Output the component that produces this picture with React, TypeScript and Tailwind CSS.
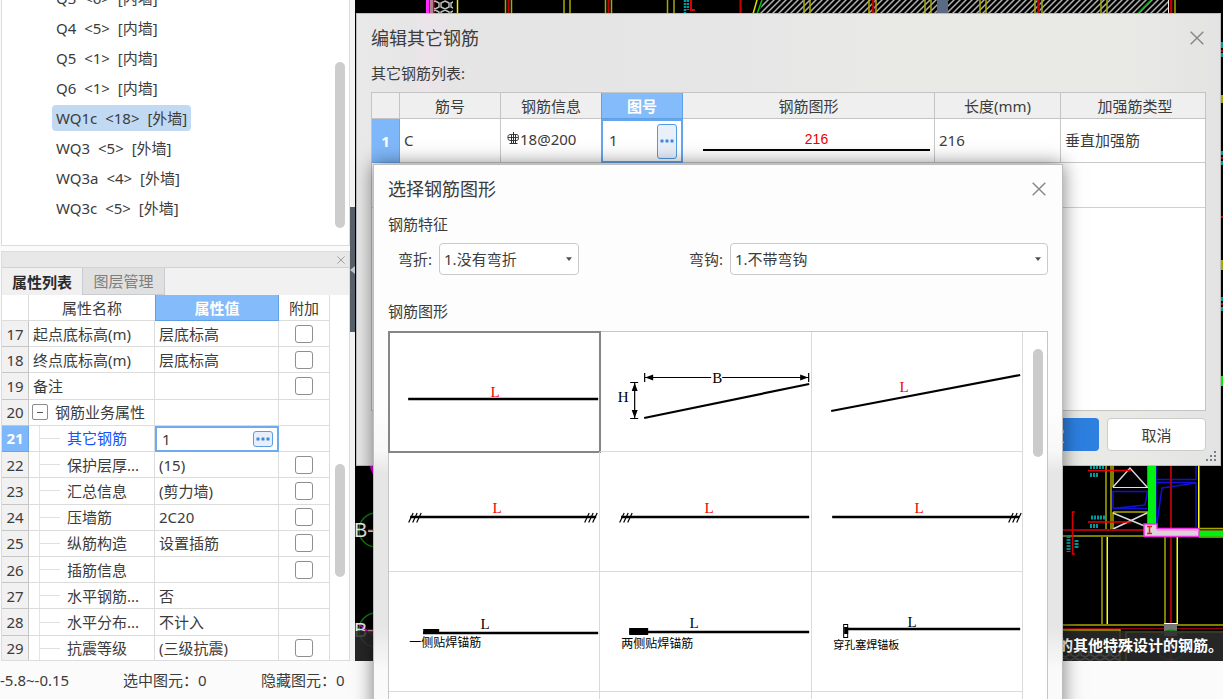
import { useState, type ReactNode } from "react";

const walls = [
  { name: "Q3", count: "<6>", type: "[内墙]" },
  { name: "Q4", count: "<5>", type: "[内墙]" },
  { name: "Q5", count: "<1>", type: "[内墙]" },
  { name: "Q6", count: "<1>", type: "[内墙]" },
  { name: "WQ1c", count: "<18>", type: "[外墙]" },
  { name: "WQ3", count: "<5>", type: "[外墙]" },
  { name: "WQ3a", count: "<4>", type: "[外墙]" },
  { name: "WQ3c", count: "<5>", type: "[外墙]" },
];

type Prop = { no: number; name: string; value: string; kind: "root" | "group" | "child"; check: boolean };

const props: Prop[] = [
  { no: 17, name: "起点底标高(m)", value: "层底标高", kind: "root", check: true },
  { no: 18, name: "终点底标高(m)", value: "层底标高", kind: "root", check: true },
  { no: 19, name: "备注", value: "", kind: "root", check: true },
  { no: 20, name: "钢筋业务属性", value: "", kind: "group", check: false },
  { no: 21, name: "其它钢筋", value: "1", kind: "child", check: false },
  { no: 22, name: "保护层厚...", value: "(15)", kind: "child", check: true },
  { no: 23, name: "汇总信息", value: "(剪力墙)", kind: "child", check: true },
  { no: 24, name: "压墙筋", value: "2C20", kind: "child", check: true },
  { no: 25, name: "纵筋构造", value: "设置插筋", kind: "child", check: true },
  { no: 26, name: "插筋信息", value: "", kind: "child", check: true },
  { no: 27, name: "水平钢筋...", value: "否", kind: "child", check: false },
  { no: 28, name: "水平分布...", value: "不计入", kind: "child", check: false },
  { no: 29, name: "抗震等级", value: "(三级抗震)", kind: "child", check: true },
];

function CloseIcon({ className }: { className: string }) {
  return (
    <svg viewBox="0 0 14 14" className={className} fill="none" stroke="currentColor" aria-hidden="true">
      <path d="M0.7 0.7 13.3 13.3M13.3 0.7 0.7 13.3" strokeWidth="1.4" />
    </svg>
  );
}

function Dots() {
  return (
    <svg viewBox="0 0 14 4" className="h-1 w-3.5" fill="#3f87d9" aria-hidden="true">
      <rect x="0.5" y="0.5" width="3" height="3" rx="0.6" />
      <rect x="5.5" y="0.5" width="3" height="3" rx="0.6" />
      <rect x="10.5" y="0.5" width="3" height="3" rx="0.6" />
    </svg>
  );
}

function WallTree() {
  const [selected, setSelected] = useState(4);
  return (
    <div className="flex h-[246px] shrink-0 border border-t-0 border-[#dcdcdc] bg-white">
      <ul className="flex flex-1 flex-col justify-end overflow-hidden pb-[22px] pl-[50px]">
        {walls.map((w, i) => (
          <li key={w.name} className="flex h-[30px] shrink-0 items-center">
            <button
              type="button"
              onClick={() => setSelected(i)}
              className={`flex h-[26px] items-center gap-1 rounded px-1 whitespace-pre ${i === selected ? "bg-[#c1d9f2]" : ""}`}
            >
              <span>{w.name} </span>
              <span>{w.count} </span>
              <span>{w.type}</span>
            </button>
          </li>
        ))}
      </ul>
      <div className="flex w-[14px] flex-col pt-[62px]">
        <div className="h-[166px] w-2.5 rounded-full bg-[#cdcdcd]" />
      </div>
    </div>
  );
}

function NameCell({ row }: { row: Prop }) {
  if (row.kind === "root") return <span className="pl-1">{row.name}</span>;
  if (row.kind === "group")
    return (
      <div className="flex items-center gap-[7px] pl-[3px]">
        <button
          type="button"
          aria-label="折叠"
          className="flex h-4 w-4 items-center justify-center rounded-[2px] border border-[#8c8c8c] bg-white"
        >
          <span className="h-px w-1.5 bg-[#555]" />
        </button>
        <span>{row.name}</span>
      </div>
    );
  return (
    <div className="ml-[10px] flex h-full items-center border-l border-[#e4e4e4]">
      <span className="h-px w-5 bg-[#e0e0e0]" />
      <span className={`pl-[7px] ${row.no === 21 ? "text-[#1650ff]" : ""}`}>{row.name}</span>
    </div>
  );
}

function PropertyPanel() {
  return (
    <section className="flex min-h-0 flex-1 flex-col overflow-hidden border border-[#dcdcdc] bg-white">
      <div className="flex h-[15px] shrink-0 items-center justify-end bg-[#e8e8e8] pr-1">
        <button type="button" aria-label="关闭" className="text-[#8e8e8e]">
          <CloseIcon className="h-2 w-2" />
        </button>
      </div>
      <div className="flex h-[28px] shrink-0 border-t border-[#cfd3d8] bg-[#f1f1f1]" role="tablist">
        <button type="button" role="tab" aria-selected="true" className="w-[81px] border-r border-[#c9ccd2] bg-[#f0f0f0] font-bold text-[#2b2b2b]">
          属性列表
        </button>
        <button type="button" role="tab" aria-selected="false" className="w-[82px] border-r border-b border-[#c9ccd2] bg-[#e0e0e0] text-[#7e7e7e]">
          图层管理
        </button>
      </div>
      <div className="flex min-h-0 flex-1">
        <table className="h-[367px] flex-1 table-fixed border-separate border-spacing-0 text-left">
          <colgroup>
            <col className="w-[27px]" />
            <col className="w-[126px]" />
            <col />
            <col className="w-[51px]" />
          </colgroup>
          <thead>
            <tr className="h-[26px] text-center">
              <th className="border-r border-b border-[#dcdcdc] p-0" aria-label="行号" />
              <th className="border-b border-[#dcdcdc] p-0 font-normal">属性名称</th>
              <th className="border border-t-0 border-[#5f9fe3] bg-[#84bbfb] p-0 font-bold text-white">属性值</th>
              <th className="border-r border-b border-[#dcdcdc] p-0 font-normal">附加</th>
            </tr>
          </thead>
          <tbody>
            {props.map((row) => {
              const active = row.no === 21;
              return (
                <tr key={row.no} className="h-[26px]">
                  <th
                    className={`border-r border-b p-0 text-center ${
                      active
                        ? "border-[#6aa5e8] bg-[#7fb8fa] font-bold text-white"
                        : "border-[#c6c6c6] bg-[#f1f1f1] font-normal"
                    }`}
                  >
                    {row.no}
                  </th>
                  <td className="h-[26px] overflow-hidden border-r border-b border-[#dcdcdc] p-0 whitespace-nowrap">
                    <NameCell row={row} />
                  </td>
                  {active ? (
                    <td className="border-2 border-[#6eaaee] p-0">
                      <div className="flex items-center justify-between pr-1 pl-[5px]">
                        <input aria-label="其它钢筋" defaultValue="1" className="h-5 w-16 bg-transparent outline-none" />
                        <button
                          type="button"
                          aria-label="编辑"
                          className="flex h-4 w-5 items-center justify-center rounded-[3px] border border-[#5a9fe6] bg-[#e8effa]"
                        >
                          <Dots />
                        </button>
                      </div>
                    </td>
                  ) : (
                    <td className="border-r border-b border-[#dcdcdc] py-0 pr-0 pl-1 whitespace-nowrap">{row.value}</td>
                  )}
                  <td className="border-r border-b border-[#dcdcdc] p-0">
                    {row.check && (
                      <input
                        type="checkbox"
                        aria-label={`附加 ${row.name}`}
                        className="mx-auto block h-[18px] w-[18px] appearance-none rounded-[3px] border border-[#8f8f8f] bg-white checked:bg-[#84bbfb]"
                      />
                    )}
                  </td>
                </tr>
              );
            })}
          </tbody>
        </table>
        <div className="w-[19px] pt-[169px] pl-[5px]">
          <div className="h-[113px] w-2.5 rounded-full bg-[#cdcdcd]" />
        </div>
      </div>
    </section>
  );
}

function Plan() {
  const olive = "#a8a800";
  return (
    <svg viewBox="355 0 868 661" preserveAspectRatio="xMaxYMin slice" className="h-full w-full bg-black" fill="none" aria-hidden="true">
      <defs>
        <pattern id="hatch" width="6" height="6" patternUnits="userSpaceOnUse">
          <path d="M-1 7 7 -1M-1 1 1 -1M5 7 7 5" stroke="#b0b0b0" strokeWidth="1.500" />
        </pattern>
        <pattern id="comb" width="10" height="9" patternUnits="userSpaceOnUse">
          <path d="M5 1 9 3V7L5 9 1 7V3Z" stroke="#bdbdbd" strokeWidth="1.500" />
        </pattern>
      </defs>
      <path d="M427.500 0V14" stroke="#ff2bff" strokeWidth="3" />
      <path d="M431.500 0V14" stroke="#b08090" strokeWidth="4" />
      <path d="M434 0V14" stroke="#d00020" />
      <rect x="434" y="0" width="19" height="14" fill="url(#comb)" />
      <path d="M457.500 0V14" stroke="#f0f000" strokeWidth="1.500" />
      <g stroke={olive} strokeWidth="1.500">
        <path d="M505.500 0V14M511.500 0V14M564 0V14M570 0V14M605.500 0V14M611.500 0V14M667.500 0V14M674 0V14" />
      </g>
      <path d="M508.500 0V14M608.500 0V14M740.500 0V14" stroke="#c80000" strokeWidth="2" />
      <path d="M685 0V13M688 0V10" stroke="#009a9a" strokeWidth="2.500" strokeDasharray="2 1" />
      <path d="M691 0V10H695" stroke="#d80000" strokeWidth="2" />
      <path d="M764 0H1168V14H758Z" fill="url(#hatch)" />
      <path d="M757 0 753 14" stroke="#e0e000" strokeWidth="1.500" />
      <path d="M762 0 757 14" stroke="#00c800" strokeWidth="1.500" />
      <g stroke={olive} strokeWidth="1.500">
        <path d="M804 0V14M810 0V14M869 0V14M876 0V14M925 0V14M931 0V14M980 0V14M986 0V14M1035 0V14M1042 0V14M1101 0V14M1107 0V14M1175 0V14" />
      </g>
      <path d="M873 0V14M1038.500 0V14M1171 0V14" stroke="#c00000" strokeWidth="2.500" />
      <rect x="937" y="0" width="11" height="14" fill="#5b6a83" />
      <path d="M1151 0 1137 14" stroke="#00a000" strokeWidth="1.500" />
      <path d="M1168.500 0V14" stroke="#eee" />
      <g strokeWidth="2">
        <path d="M1222 42V48M1222 53V57M1222 151V155M1222 161V165M1222 297V301M1222 307V311" stroke="#009a9a" />
        <path d="M1222 50V52M1222 157V159M1222 216V218M1222 303V305" stroke="#d00000" />
        <path d="M1222 95V103M1222 260V270" stroke={olive} />
        <path d="M1222 376V386" stroke="#00f000" />
      </g>
      <g stroke="#0e7a0e" strokeWidth="1.500">
        <circle cx="376" cy="530" r="17" />
        <circle cx="376" cy="630" r="17" />
      </g>
      <path d="M368 530H378M368 630H378" stroke="#d00000" strokeWidth="1.500" />
      <path d="M371 466 376 478" stroke="#e000e0" strokeWidth="3" />
      <path d="M357 623 374 636" stroke="#e000e0" strokeWidth="1.500" />
      <g fill="#e8e8e8" className="font-['Liberation_Sans'] text-[20px]">
        <text x="354" y="537">B-</text>
        <text x="354" y="637">B-</text>
      </g>
      <g stroke={olive} strokeWidth="1.500">
        <path d="M1106 466V529M1111 466V529M1199 466V529" />
        <path d="M1063 536H1148M1063 625H1223M1063 630H1120V661M1126 661V632H1223M1102 537V624M1107 537V624M1165 537V624M1177 537V624M1199 528.500H1223M1199 537H1223" />
      </g>
      <path d="M1113 466V487.500H1148V466M1113 529V512H1148V529M1107.500 537V624M1177.500 537V624M1198.500 466V528" stroke="#ffff00" />
      <path d="M1113 487 1130 468 1147 487M1113 513 1147 527M1147 513 1113 529" stroke="#d8d8d8" strokeWidth="1.500" />
      <path d="M1113 491.500H1147.500L1145 505 1113 508.500ZM1113 508.500H1147M1156 466V530L1162 488 1196 483V527M1156 479.500H1196V466M1156 482.500H1196" stroke="#1010d8" strokeWidth="1.500" />
      <path d="M1152 466V525" stroke="#00f010" strokeWidth="8" />
      <path d="M1063 530H1223M1171 466V661" stroke="#a8000c" strokeWidth="2" />
      <path d="M1063 628.500H1223" stroke="#900010" />
      <path d="M1088 470.500H1131M1088 522H1131M1075 512H1072.500V554H1075" stroke="#e80000" strokeWidth="1.500" />
      <g stroke="#009a9a" strokeWidth="4" strokeDasharray="2 1">
        <path d="M1090 467H1106M1090 475H1098M1091 517.500H1106M1090 526H1098M1068.500 536V552M1076.500 540V549" />
      </g>
      <rect x="1199" y="530.500" width="24" height="6" fill="#00f010" />
      <path d="M1144 524H1157V528.500H1199V536.500H1144Z" fill="#dcd3da" stroke="#f030e8" strokeWidth="1.500" />
      <path d="M1147 526.500H1152M1149.500 526.500V533M1147 533.500H1152" stroke="#f01818" strokeWidth="1.500" />
      <path d="M1157 530.500H1199" stroke="#f09ad8" />
      <rect x="1164" y="623" width="13" height="13" fill="#777" />
      <path d="M1164 623.500H1177" stroke="#fff" />
      <circle cx="1171" cy="645" r="15" stroke="#0b7a0b" />
      <rect x="1063" y="651" width="57" height="10" fill="url(#comb)" />
    </svg>
  );
}

function RebarMark() {
  return (
    <svg viewBox="0 0 12 14" className="h-3.5 w-3" fill="none" stroke="#2f2f2f" aria-hidden="true">
      <path d="M6.500 0V11M4.500 2.500V11M8.500 2.500V11M2.500 11.500H10.500" />
      <path d="M4.500 2.500H3Q0.800 2.500 0.800 5.500T3 8.500H10Q11.500 8.500 11.500 5.500T10 2.500H4.500M1 5.500H11" strokeWidth="0.900" />
    </svg>
  );
}

function EditDialog() {
  return (
    <section
      aria-label="编辑其它钢筋"
      className="absolute top-[13px] right-[2px] left-[356px] flex h-[453px] flex-col border border-[#bdbdbd] bg-[linear-gradient(90deg,#e9e9e9_0%,#e6e6e6_6%,#ece4ea_8%,#e5e5e5_11%,#e6e6e6_45%,#e9eae6_60%,#e9eae6_90%,#e3e3e3_100%)] px-[14px]"
    >
      <header className="flex h-12 shrink-0 items-center justify-between">
        <h1 className="text-[18px] leading-6">编辑其它钢筋</h1>
        <button type="button" aria-label="关闭" className="pr-0.5 text-[#858585]">
          <CloseIcon className="h-3.5 w-3.5" />
        </button>
      </header>
      <h2 className="h-[30px] shrink-0 leading-[22px]">其它钢筋列表:</h2>
      <div className="h-[319px] shrink-0 border border-[#c4c4c4] bg-white">
        <table className="w-full table-fixed border-separate border-spacing-0 text-left">
          <colgroup>
            <col className="w-[28px]" />
            <col className="w-[101px]" />
            <col className="w-[100px]" />
            <col className="w-[82px]" />
            <col />
            <col className="w-[126px]" />
            <col className="w-[144px]" />
          </colgroup>
          <thead>
            <tr className="h-[26px] bg-[#efefef] text-center leading-[18px]">
              <th className="border-r border-b border-[#c4c4c4] p-0" aria-label="行号" />
              <th className="border-r border-b border-[#c4c4c4] p-0 font-normal">筋号</th>
              <th className="border-b border-[#c4c4c4] p-0 font-normal">钢筋信息</th>
              <th className="border border-t-0 border-[#5fa0e6] bg-[#84bbfb] p-0 font-bold text-white">图号</th>
              <th className="border-r border-b border-[#c4c4c4] p-0 font-normal">钢筋图形</th>
              <th className="border-r border-b border-[#c4c4c4] p-0 font-normal">长度(mm)</th>
              <th className="border-b border-[#c4c4c4] p-0 pl-1 font-normal">加强筋类型</th>
            </tr>
          </thead>
          <tbody>
            <tr className="h-[44px]">
              <th className="border-r border-b border-[#6aa5e8] bg-[#7fb8fa] p-0 text-center font-bold text-white">1</th>
              <td className="border-r border-b border-[#c9c9c9] pt-0 pr-0 pb-0.5 pl-1">C</td>
              <td className="border-b border-[#c9c9c9] pt-0 pr-0 pb-1 pl-1.5">
                <span className="flex items-center gap-px">
                  <RebarMark />
                  18@200
                </span>
              </td>
              <td className="border-2 border-[#64a6ee] p-0">
                <div className="flex items-center justify-between pr-1 pl-1.5">
                  <input aria-label="图号" defaultValue="1" className="h-6 w-8 bg-transparent pb-0.5 outline-none" />
                  <button
                    type="button"
                    aria-label="选择图形"
                    className="flex h-[35px] w-5 items-center justify-center rounded-[3px] border border-[#4f9ce6] bg-[#eaf0fa]"
                  >
                    <Dots />
                  </button>
                </div>
              </td>
              <td className="border-r border-b border-[#c9c9c9] py-0 pr-1 pl-5">
                <div className="border-b-2 border-black pb-0.5 text-center font-['Liberation_Sans'] text-sm leading-4 text-[#f00000]">
                  216
                </div>
              </td>
              <td className="border-r border-b border-[#c9c9c9] pt-0 pr-0 pb-0.5 pl-1">216</td>
              <td className="border-b border-[#c9c9c9] pt-0 pr-0 pb-0.5 pl-1">垂直加强筋</td>
            </tr>
            <tr className="h-[45px]">
              <td colSpan={7} className="border-b border-[#d0d0d0] p-0" />
            </tr>
          </tbody>
        </table>
      </div>
      <footer className="flex justify-end gap-2 pt-[7px]">
        <button type="button" className="h-[33px] w-[99px] rounded bg-[#2d7fe0] text-white">
          确定
        </button>
        <button type="button" className="h-[33px] w-[99px] rounded border border-[#cccccc] bg-white">
          取消
        </button>
      </footer>
      <svg viewBox="0 0 10 10" className="absolute right-1 bottom-1 h-2.5 w-2.5" fill="#777d86" aria-hidden="true">
        <path d="M8 0h2v2h-2zM4 4h2v2h-2zM8 4h2v2h-2zM0 8h2v2h-2zM4 8h2v2h-2zM8 8h2v2h-2z" />
      </svg>
    </section>
  );
}

function Hatches({ x }: { x: number }) {
  return (
    <g stroke="#000" strokeWidth="1.200" transform={`translate(${x} 61)`}>
      <path d="M0.500 10.500 5 1M4.500 10.500 9 1M8.500 10.500 13 1" />
    </g>
  );
}

function Len({ x, y, color }: { x: number; y: number; color: string }) {
  return (
    <text x={x} y={y} fill={color} textAnchor="middle" className="font-['Liberation_Serif'] text-[15px]">
      L
    </text>
  );
}

function Caption({ x, y, children }: { x: number; y: number; children: ReactNode }) {
  return (
    <text x={x} y={y} fill="#000" className="text-[12px]">
      {children}
    </text>
  );
}

const shapes: { label: string; art: ReactNode }[] = [
  {
    label: "直筋",
    art: (
      <>
        <path d="M20 68H210" stroke="#000" strokeWidth="2.500" />
        <Len x={107} y={66} color="#f00000" />
      </>
    ),
  },
  {
    label: "斜筋 H B",
    art: (
      <>
        <path d="M45 87 210 53" stroke="#000" strokeWidth="2.200" />
        <path d="M45.500 42V51M209.500 42V51M46 46.500H112M123 46.500H209M31 51.500H39M31 87.500H39M35.500 52V87" stroke="#000" strokeWidth="1.200" />
        <path d="M46 46.500 54 43.500V49.500ZM209 46.500 201 43.500V49.500ZM35.500 52 32.500 60H38.500ZM35.500 87 32.500 79H38.500Z" fill="#000" />
        <g fill="#000" textAnchor="middle" className="font-['Liberation_Serif'] text-[15px]">
          <text x="118" y="52">B</text>
          <text x="24" y="71">H</text>
        </g>
      </>
    ),
  },
  {
    label: "斜筋",
    art: (
      <>
        <path d="M20 80 209 44" stroke="#000" strokeWidth="2.200" />
        <Len x={93} y={61} color="#f00000" />
      </>
    ),
  },
  {
    label: "两端锚固",
    art: (
      <>
        <path d="M22 66H208" stroke="#000" strokeWidth="2.500" />
        <Hatches x={20} />
        <Hatches x={196} />
        <Len x={109} y={62} color="#f00000" />
      </>
    ),
  },
  {
    label: "左端锚固",
    art: (
      <>
        <path d="M22 66H210" stroke="#000" strokeWidth="2.500" />
        <Hatches x={20} />
        <Len x={110} y={62} color="#f00000" />
      </>
    ),
  },
  {
    label: "右端锚固",
    art: (
      <>
        <path d="M21 66H208" stroke="#000" strokeWidth="2.500" />
        <Hatches x={197} />
        <Len x={108} y={62} color="#f00000" />
      </>
    ),
  },
  {
    label: "一侧贴焊锚筋",
    art: (
      <>
        <path d="M35 62H210" stroke="#000" strokeWidth="2.500" />
        <rect x="35" y="58" width="16" height="5" fill="#000" />
        <Len x={97} y={58} color="#000" />
        <Caption x={21} y={76}>一侧贴焊锚筋</Caption>
      </>
    ),
  },
  {
    label: "两侧贴焊锚筋",
    art: (
      <>
        <path d="M30 61H210" stroke="#000" strokeWidth="2.500" />
        <rect x="30" y="57" width="19" height="7" fill="#000" />
        <Len x={95} y={57} color="#000" />
        <Caption x={22} y={77}>两侧贴焊锚筋</Caption>
      </>
    ),
  },
  {
    label: "穿孔塞焊锚板",
    art: (
      <>
        <path d="M36 58H209" stroke="#000" strokeWidth="2.500" />
        <rect x="32.500" y="53.500" width="4" height="13" fill="#fff" stroke="#000" />
        <rect x="33" y="56" width="4" height="7" fill="#000" />
        <Len x={101} y={56} color="#000" />
        <text x="22" y="78" fill="#000" className="text-[11px]">穿孔塞焊锚板</text>
      </>
    ),
  },
  { label: "图形10", art: null },
  { label: "图形11", art: null },
  { label: "图形12", art: null },
];

function Choice({ id, label, option, className }: { id: string; label: string; option: string; className: string }) {
  return (
    <div className="flex items-center gap-[7px]">
      <label htmlFor={id}>{label}</label>
      <div className={`relative ${className}`}>
        <select id={id} className="h-8 w-full appearance-none rounded border border-[#cacaca] bg-white pl-1">
          <option>{option}</option>
        </select>
        <svg viewBox="0 0 8 5" className="pointer-events-none absolute top-3.5 right-[7px] h-1 w-1.5" fill="#4a5260" aria-hidden="true">
          <path d="M0 0H8L4 5Z" />
        </svg>
      </div>
    </div>
  );
}

function ShapeDialog() {
  const [picked, setPicked] = useState(0);
  return (
    <section
      aria-label="选择钢筋图形"
      className="absolute top-[164px] -bottom-4 left-[373px] flex w-[690px] flex-col overflow-hidden border border-[#bdbdbd] bg-[linear-gradient(180deg,#fdfdfd_0%,#fdfdfd_44%,#f8f8f9_52%,#e7e6e6_56%,#e6e6e6_84%,#fafafa_92%)] px-[14px] shadow-[0_0_18px_rgba(0,0,0,0.5)]"
    >
      <header className="flex h-12 shrink-0 items-center justify-between">
        <h1 className="text-[18px] leading-6">选择钢筋图形</h1>
        <button type="button" aria-label="关闭" className="pr-0.5 text-[#858585]">
          <CloseIcon className="h-3.5 w-3.5" />
        </button>
      </header>
      <h2 className="h-[30px] shrink-0 leading-[22px]">钢筋特征</h2>
      <div className="flex h-8 shrink-0 justify-between pl-2.5">
        <Choice id="bend" label="弯折:" option="1.没有弯折" className="w-[140px]" />
        <Choice id="hook" label="弯钩:" option="1.不带弯钩" className="w-[318px]" />
      </div>
      <h2 className="mt-6 h-[32px] shrink-0 leading-6">钢筋图形</h2>
      <div className="flex shrink-0 border border-[#c6c6c6] bg-white">
        <div className="grid flex-1 grid-cols-3">
          {shapes.map((s, i) => (
            <button
              key={s.label}
              type="button"
              aria-label={s.label}
              aria-pressed={i === picked}
              onClick={() => setPicked(i)}
              className={`h-[120px] border-r border-b border-[#dadada] ${i === picked ? "outline-2 -outline-offset-1 outline-[#868686]" : ""}`}
            >
              <svg viewBox="1 1 210 119" className="h-full w-full" fill="none">
                {s.art}
              </svg>
            </button>
          ))}
        </div>
        <div className="w-[24px] pt-[17px] pl-2.5">
          <div className="h-[108px] w-2.5 rounded-full bg-[#cbcbcb]" />
        </div>
      </div>
    </section>
  );
}

export default function App() {
  return (
    <div className="relative flex h-screen flex-col overflow-hidden bg-[#fbfbfb] font-['Noto_Sans','Noto_Sans_CJK_SC',sans-serif] text-[15px] leading-5 text-[#3c3c3c]">
      <main className="flex min-h-0 flex-1">
        <aside className="flex w-[350px] shrink-0 flex-col gap-[5px] pl-px">
          <WallTree />
          <PropertyPanel />
        </aside>
        <div className="flex w-[5px] shrink-0 flex-col bg-[#f4f4f4] pt-[207px]">
          <button type="button" aria-label="收起面板" className="flex h-[125px] items-center justify-center bg-[#56606b]">
            <svg viewBox="0 0 5 8" className="h-2 w-[5px]" fill="#c3c8ce" aria-hidden="true">
              <path d="M5 0V8L0 4Z" />
            </svg>
          </button>
        </div>
        <div className="relative min-w-0 flex-1 overflow-hidden">
          <Plan />
          <p className="absolute inset-x-0 bottom-0 h-[30px] bg-[#2d2d2d]/85 text-right text-[15px] leading-7 font-bold whitespace-nowrap text-white">
            的其他特殊设计的钢筋。
          </p>
        </div>
      </main>
      <footer className="flex h-[38px] shrink-0 items-center">
        <span className="w-[123px]">-5.8~-0.15</span>
        <span className="w-[138px]">选中图元：0</span>
        <span>隐藏图元：0</span>
      </footer>
      <EditDialog />
      <ShapeDialog />
    </div>
  );
}
